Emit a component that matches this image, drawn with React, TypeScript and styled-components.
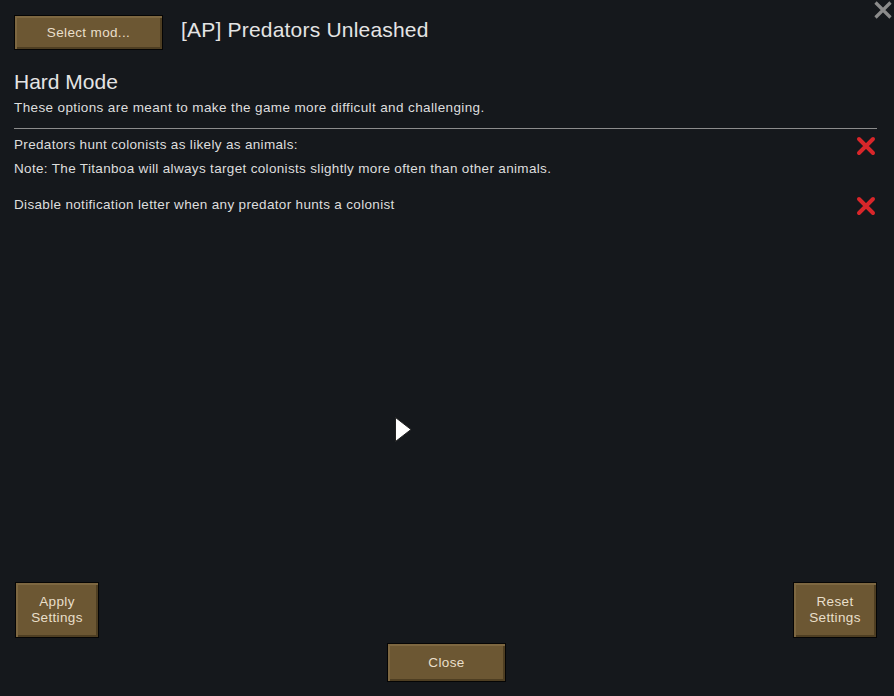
import React from "react";
import styled, { createGlobalStyle } from "styled-components";

const Global = createGlobalStyle`
  html, body { margin: 0; padding: 0; background: #15181c; }
  body { font-family: "Liberation Sans", Arial, sans-serif; color: #dedede; }
  * { box-sizing: border-box; }
`;

const Window = styled.div`
  position: relative;
  width: 894px;
  height: 696px;
  background: #15181c;
  padding: 15px 17px 14px 14px;
  display: flex;
  flex-direction: column;
  overflow: hidden;
`;

const Header = styled.div`
  display: flex;
  align-items: flex-start;
  gap: 18px;
`;

const ModButton = styled.button<{ $w: number; $h: number }>`
  width: ${(p) => p.$w}px;
  height: ${(p) => p.$h}px;
  flex: none;
  margin: 0;
  padding: 0;
  border: 1px solid #050505;
  background: #6c5733;
  box-shadow: inset 2px 2px 0 #7d6741, inset -2px -2px 0 #4e3e22;
  color: #e9dfca;
  font-family: "Liberation Sans", Arial, sans-serif;
  font-size: 13.5px;
  letter-spacing: 0.35px;
  line-height: 16px;
  text-align: center;
  display: flex;
  align-items: center;
  justify-content: center;
`;

const Title = styled.div`
  font-size: 21px;
  letter-spacing: 0.2px;
  line-height: 24px;
  color: #e4e4e4;
  padding-top: 3px;
`;

const SectionTitle = styled.div`
  margin-top: 20px;
  font-size: 21px;
  line-height: 24px;
  color: #e4e4e4;
`;

const Description = styled.div`
  margin-top: 6px;
  font-size: 13.5px;
  letter-spacing: 0.38px;
  line-height: 16px;
`;

const Divider = styled.div`
  margin-top: 12px;
  height: 1px;
  background: #8c8c8c;
`;

const Options = styled.div`
  margin-top: 8px;
  display: flex;
  flex-direction: column;
  gap: 20px;
`;

const OptionRow = styled.div`
  display: flex;
  justify-content: space-between;
  align-items: flex-start;
`;

const OptionText = styled.div`
  display: flex;
  flex-direction: column;
  gap: 8px;
  font-size: 13.5px;
  letter-spacing: 0.33px;
  line-height: 16px;
`;

const CheckIcon = styled.svg`
  width: 20px;
  height: 20px;
  flex: none;
  margin-top: -1px;
  margin-right: 1px;
`;

const Spacer = styled.div`
  flex: 1;
`;

const Footer = styled.div`
  display: grid;
  grid-template-columns: 84px 1fr 84px;
  grid-template-rows: 56px 39px;
  row-gap: 5px;
  margin-left: 1px;
`;

const CenterCell = styled.div`
  grid-column: 1 / span 3;
  display: flex;
  justify-content: center;
  padding-left: 1px;
`;

const RightCell = styled.div`
  grid-column: 3;
`;

const CloseIcon = styled.svg`
  position: absolute;
  top: 1px;
  right: 2px;
  width: 18px;
  height: 18px;
`;

const Cursor = styled.svg`
  position: absolute;
  left: 394px;
  top: 416px;
  width: 19px;
  height: 27px;
`;

const RedX = () => (
  <CheckIcon viewBox="0 0 20 20">
    <path d="M3 3 L17 17 M17 3 L3 17" stroke="#d8262a" strokeWidth="4" strokeLinecap="round" fill="none" />
  </CheckIcon>
);

export default function App() {
  return (
    <>
      <Global />
      <Window>
        <Header>
          <ModButton $w={149} $h={35}>Select mod...</ModButton>
          <Title>[AP] Predators Unleashed</Title>
        </Header>
        <SectionTitle>Hard Mode</SectionTitle>
        <Description>These options are meant to make the game more difficult and challenging.</Description>
        <Divider />
        <Options>
          <OptionRow>
            <OptionText>
              <span>Predators hunt colonists as likely as animals:</span>
              <span>Note: The Titanboa will always target colonists slightly more often than other animals.</span>
            </OptionText>
            <RedX />
          </OptionRow>
          <OptionRow>
            <OptionText>
              <span>Disable notification letter when any predator hunts a colonist</span>
            </OptionText>
            <RedX />
          </OptionRow>
        </Options>
        <Spacer />
        <Footer>
          <ModButton $w={84} $h={56}>Apply<br />Settings</ModButton>
          <RightCell>
            <ModButton $w={84} $h={56}>Reset<br />Settings</ModButton>
          </RightCell>
          <CenterCell>
            <ModButton $w={119} $h={39}>Close</ModButton>
          </CenterCell>
        </Footer>
        <CloseIcon viewBox="0 0 18 18">
          <path d="M1.5 1.5 L16.5 16.5 M16.5 1.5 L1.5 16.5" stroke="#8b8b8b" strokeWidth="3.2" fill="none" />
        </CloseIcon>
        <Cursor viewBox="0 0 19 27">
          <path d="M1.5 1.5 L17 13.5 L1.5 25.5 Z" fill="#ffffff" stroke="#222" strokeWidth="1" />
        </Cursor>
      </Window>
    </>
  );
}
